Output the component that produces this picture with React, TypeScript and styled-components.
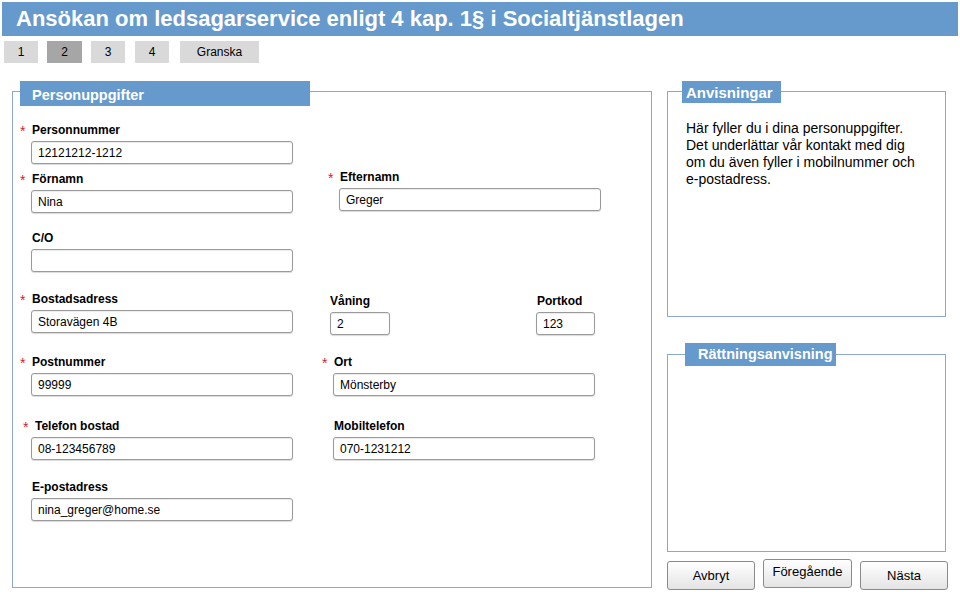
import { FC } from "react";
import styled, { createGlobalStyle } from "styled-components";

const GlobalStyle = createGlobalStyle`
  html, body {
    margin: 0;
    padding: 0;
    background: #ffffff;
    font-family: "Liberation Sans", Arial, sans-serif;
    color: #000;
  }
`;

const Page = styled.div`
  width: 960px;
  height: 592px;
  padding: 2px 0 0 2px;
  box-sizing: border-box;
  overflow: hidden;
`;

const TitleBar = styled.h1`
  margin: 0;
  width: 956px;
  height: 34px;
  background: #6699cc;
  color: #ffffff;
  font-size: 22px;
  font-weight: bold;
  line-height: 34px;
  padding-left: 14px;
  box-sizing: border-box;
`;

const Tabs = styled.div`
  display: flex;
  margin: 5px 0 0 2px;
`;

const Tab = styled.div<{ $active?: boolean; $w: number; $gap: number }>`
  width: ${(p) => p.$w}px;
  height: 22px;
  margin-right: ${(p) => p.$gap}px;
  background: ${(p) => (p.$active ? "#a6a6a6" : "#d9d9d9")};
  font-size: 12px;
  line-height: 22px;
  text-align: center;
`;

const Main = styled.div`
  display: flex;
  gap: 15px;
  margin: 28px 0 0 10px;
`;

const Panel = styled.section<{ $w: number; $h: number }>`
  width: ${(p) => p.$w}px;
  height: ${(p) => p.$h}px;
  border: 1px solid #8ea8cc;
  box-sizing: border-box;
`;

const Legend = styled.div<{
  $w: number;
  $h: number;
  $ml: number;
  $mt: number;
  $size: number;
  $pl: number;
  $pt?: number;
}>`
  width: ${(p) => p.$w}px;
  height: ${(p) => p.$h}px;
  margin: ${(p) => p.$mt}px 0 0 ${(p) => p.$ml}px;
  padding: ${(p) => p.$pt ?? 0}px 0 0 ${(p) => p.$pl}px;
  box-sizing: border-box;
  background: #6699cc;
  color: #ffffff;
  font-weight: bold;
  font-size: ${(p) => p.$size}px;
  line-height: ${(p) => p.$h - (p.$pt ?? 0)}px;
  white-space: nowrap;
`;

const FormBody = styled.div`
  padding-left: 18px;
  display: flex;
  flex-direction: column;
`;

const Row = styled.div<{ $mt: number }>`
  display: flex;
  align-items: flex-start;
  margin-top: ${(p) => p.$mt}px;
`;

const Field = styled.div<{ $w: number; $ml?: number; $dy?: number }>`
  width: ${(p) => p.$w}px;
  margin-left: ${(p) => p.$ml ?? 0}px;
  margin-top: ${(p) => p.$dy ?? 0}px;
  display: flex;
  flex-direction: column;
  gap: 4px;
`;

const Label = styled.div<{ $pad?: number }>`
  display: flex;
  height: 14px;
  font-size: 12px;
  font-weight: bold;
  line-height: 15px;
  padding-left: ${(p) => p.$pad ?? 1}px;
  white-space: nowrap;
`;

const Star = styled.span`
  width: 0;
  margin-left: -12px;
  margin-right: 12px;
  color: #cc2233;
  font-weight: normal;
  font-size: 14px;
  line-height: 16px;
`;

const Input = styled.div`
  height: 23px;
  border: 1px solid #9a9a9a;
  border-radius: 3px;
  box-shadow: inset 0 1px 1px rgba(0, 0, 0, 0.08), 0 1px 1px rgba(0, 0, 0, 0.15);
  box-sizing: border-box;
  padding-left: 6px;
  font-size: 12px;
  line-height: 22px;
  background: #ffffff;
`;

const RightColumn = styled.div`
  display: flex;
  flex-direction: column;
`;

const HelpText = styled.p`
  margin: 17px 0 0 18px;
  font-size: 14px;
  line-height: 17px;
`;

const Buttons = styled.div`
  display: flex;
  gap: 8px;
  margin-top: 7px;
`;

const Button = styled.div<{ $up?: boolean; $w: number }>`
  width: ${(p) => p.$w}px;
  height: 29px;
  margin-top: ${(p) => (p.$up ? 0 : 2)}px;
  border: 1px solid #8a8a8a;
  border-radius: 3px;
  box-sizing: border-box;
  background: linear-gradient(#ffffff, #e4e4e4);
  font-size: 13px;
  text-align: center;
  line-height: ${(p) => (p.$up ? 24 : 27)}px;
`;

type FieldProps = {
  label: string;
  value: string;
  w: number;
  ml?: number;
  dy?: number;
  req?: boolean;
  pad?: number;
};

const FormField: FC<FieldProps> = ({ label, value, w, ml, dy, req, pad }) => (
  <Field $w={w} $ml={ml} $dy={dy}>
    <Label $pad={pad}>
      {req && <Star>*</Star>}
      {label}
    </Label>
    <Input>{value}</Input>
  </Field>
);

export default function App() {
  return (
    <Page>
      <GlobalStyle />
      <TitleBar>Ansökan om ledsagarservice enligt 4 kap. 1§ i Socialtjänstlagen</TitleBar>
      <Tabs>
        <Tab $w={34} $gap={9}>1</Tab>
        <Tab $w={35} $gap={9} $active>2</Tab>
        <Tab $w={34} $gap={10}>3</Tab>
        <Tab $w={34} $gap={11}>4</Tab>
        <Tab $w={79} $gap={0}>Granska</Tab>
      </Tabs>
      <Main>
        <Panel $w={640} $h={497}>
          <Legend $w={290} $h={25} $ml={7} $mt={-11} $size={14.5} $pl={12} $pt={3}>
            Personuppgifter
          </Legend>
          <FormBody>
            <Row $mt={17}>
              <FormField req label="Personnummer" value="12121212-1212" w={262} />
            </Row>
            <Row $mt={8}>
              <FormField req label="Förnamn" value="Nina" w={262} />
              <FormField req label="Efternamn" value="Greger" w={262} ml={46} dy={-2} />
            </Row>
            <Row $mt={18}>
              <FormField label="C/O" value="" w={262} />
            </Row>
            <Row $mt={20}>
              <FormField req label="Bostadsadress" value="Storavägen 4B" w={262} />
              <FormField label="Våning" value="2" w={60} ml={37} dy={2} pad={0} />
              <FormField label="Portkod" value="123" w={59} ml={146} dy={2} />
            </Row>
            <Row $mt={20}>
              <FormField req label="Postnummer" value="99999" w={262} />
              <FormField req label="Ort" value="Mönsterby" w={262} ml={40} />
            </Row>
            <Row $mt={23}>
              <FormField req label="Telefon bostad" value="08-123456789" w={262} pad={4} />
              <FormField label="Mobiltelefon" value="070-1231212" w={262} ml={40} />
            </Row>
            <Row $mt={20}>
              <FormField label="E-postadress" value="nina_greger@home.se" w={262} />
            </Row>
          </FormBody>
        </Panel>
        <RightColumn>
          <Panel $w={279} $h={226}>
            <Legend $w={99} $h={22} $ml={14} $mt={-11} $size={15} $pl={4} $pt={1}>
              Anvisningar
            </Legend>
            <HelpText>
              Här fyller du i dina personuppgifter.
              <br />
              Det underlättar vår kontakt med dig
              <br />
              om du även fyller i mobilnummer och
              <br />
              e-postadress.
            </HelpText>
          </Panel>
          <Panel $w={279} $h={198} style={{ marginTop: 37 }}>
            <Legend $w={151} $h={23} $ml={17} $mt={-12} $size={14.5} $pl={13}>
              Rättningsanvisning
            </Legend>
          </Panel>
          <Buttons>
            <Button $w={88}>Avbryt</Button>
            <Button $w={89} $up>
              Föregående
            </Button>
            <Button $w={88}>Nästa</Button>
          </Buttons>
        </RightColumn>
      </Main>
    </Page>
  );
}
